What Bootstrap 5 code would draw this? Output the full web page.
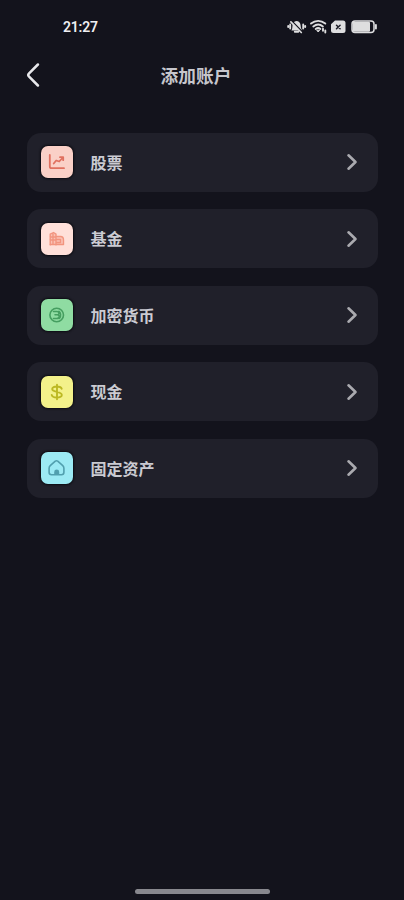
<!DOCTYPE html>
<html lang="zh-CN">
<head>
<meta charset="utf-8">
<meta name="viewport" content="width=device-width, initial-scale=1">
<title>添加账户</title>
<link href="https://cdn.jsdelivr.net/npm/bootstrap@5.3.0/dist/css/bootstrap.min.css" rel="stylesheet">
<style>
body{background:#13131c;color:#d9d9de;font-family:Roboto,"Noto Sans CJK SC",sans-serif}
.screen{height:900px;width:100%;overflow:hidden}
.status{height:52px;padding:1px 25px 0 63px}
.clock{font-size:14px;letter-spacing:-.2px;font-weight:600;color:#f0f0f2;line-height:1}
.topbar{height:48px;padding:0 38px 0 26px}
.topbar .side{width:33px;color:#e8e8eb;line-height:0}
.page-title{font-size:17.7px;font-weight:600;line-height:1;margin:0;padding-top:4px;color:#c6c6cc}
.accounts{padding:32.5px 26px 0 27px;gap:17.5px}
.account{height:59px;border-radius:14px;background:#20202a;padding:0 20.5px 0 14px;color:#cbcbd2;font-size:16px;font-weight:700;line-height:1}
.account:hover{color:#fff}
.account-name{padding-top:3px}
.tile{width:32px;height:32px;border-radius:7px;margin-right:17.5px;box-shadow:0 0 2px 1px #0c0c12}
.stock{background:#fad0c7;color:#e0705f}
.fund{background:#ffe0d9;color:#f2957f}
.crypto{background:#8fdca2;color:#459e60}
.cash{background:#f3f18a;color:#bcb823}
.asset{background:#9ceaf4;color:#519fae}
.chev{color:#aaaaaf}
.homebar{width:135px;height:5px;background:#88888e;margin-bottom:6.5px}
svg{display:block;fill:none;stroke:currentColor;stroke-linecap:round;stroke-linejoin:round}
</style>
</head>
<body>
<div class="screen d-flex flex-column">
  <div class="status d-flex align-items-center justify-content-between">
    <span class="clock">21:27</span>
    <svg width="92" height="16" viewBox="0 0 92 16" color="#dededf">
      <path d="M4.400 11.500C5.500 9.500 5.300 8.500 5.500 6.500 5.700 4 7 2.300 9.300 2c2.600 0 4.100 1.700 4.300 4.200.2 2 .2 3 1.600 5.300z" fill="currentColor" stroke="none"/>
      <path d="M7.800 12.700h3.500M3.200 5.500v4M16.200 5.500v4M1.200 7v1M18.200 7v1" stroke-width="1.900"/>
      <path d="M5 2.400l10 10.100" stroke="#13131c" stroke-width="1.600"/><path d="M3.900 2.900l10.400 10.600" stroke-width="1.700"/>
      <path d="M24 4.600c4.300-3.400 10-3.400 14.300 0M26.300 7.400c3-2.300 6.700-2.300 9.600 0M28.700 10c1.600-1.200 3.300-1.200 4.700 0" stroke-width="1.900"/>
      <path d="M30 11.500l1.200 1.500 1.200-1.500z" fill="currentColor"/>
      <path d="M36 9.700v2M38.300 11.500v2" stroke-width="1.900"/>
      <path d="M48 1.500H56a2.500 2.500 0 0 1 2.500 2.500v7.500A2.500 2.500 0 0 1 56 14H46.500a2.500 2.500 0 0 1-2.500-2.500V5.200z" fill="currentColor" stroke="none"/>
      <path d="M49.500 6.200l3.600 3.600M53.100 6.200l-3.600 3.600" stroke="#20202a" stroke-width="1.500"/>
      <rect x="65" y="2" width="22" height="11.500" rx="3" stroke-width="1.500"/>
      <rect x="65.500" y="2.700" width="17.500" height="10.100" rx="1.200" fill="currentColor" stroke="none"/>
      <path d="M88.900 6v3.600" stroke-width="1.900"/>
    </svg>
  </div>
  <header class="topbar d-flex align-items-center justify-content-between">
    <a href="#" class="side" aria-label="返回"><svg width="14" height="26" viewBox="0 0 14 26" stroke-width="2.500"><path d="M11.500 1.500L2.700 10.300q-1.700 1.700 0 3.400L11.500 22.500" transform="translate(.4 0)"/></svg></a>
    <h1 class="page-title">添加账户</h1>
    <span class="side"></span>
  </header>
  <main class="accounts d-flex flex-column flex-grow-1">
    <a href="#" class="account d-flex align-items-center text-decoration-none">
      <span class="tile stock d-flex align-items-center justify-content-center"><svg width="18" height="18" viewBox="0 0 18 18" stroke-width="1.800"><path d="M1.800 2v11.500q0 1.700 1.700 1.700H16"/><path d="M5.700 10.500l2.500-3 3 1L14.500 5M12 4.200h3.200v3"/></svg></span>
      <span class="account-name">股票</span>
      <svg class="chev ms-auto" width="12" height="18" viewBox="0 0 12 18" stroke-width="2.600"><path d="M2.500 2.300L9.500 9l-7 6.700"/></svg>
    </a>
    <a href="#" class="account d-flex align-items-center text-decoration-none">
      <span class="tile fund d-flex align-items-center justify-content-center"><svg width="18" height="18" viewBox="0 0 18 18" stroke-width="1.400"><path d="M2.200 15V4.200L5.500 2.500 8 4.200V15M2 7h6M2 10h6M5 4v10M8 6.500h4.500q3 0 3 3.500v4.500H2M9 9.500h3.500v3H9" fill="#f2957f66"/></svg></span>
      <span class="account-name">基金</span>
      <svg class="chev ms-auto" width="12" height="18" viewBox="0 0 12 18" stroke-width="2.600"><path d="M2.500 2.300L9.500 9l-7 6.700"/></svg>
    </a>
    <a href="#" class="account d-flex align-items-center text-decoration-none">
      <span class="tile crypto d-flex align-items-center justify-content-center"><svg width="18" height="18" viewBox="0 0 18 18" stroke-width="1.600"><circle cx="8.700" cy="9" r="6.800"/><path d="M5.500 5.500h3.300c3 0 3 3.300 0 3.300H7 9.200c3 0 2.700 3.700-.4 3.700H5.500M11 5.300c1.700 1.500 2.300 4.500.5 7"/></svg></span>
      <span class="account-name">加密货币</span>
      <svg class="chev ms-auto" width="12" height="18" viewBox="0 0 12 18" stroke-width="2.600"><path d="M2.500 2.300L9.500 9l-7 6.700"/></svg>
    </a>
    <a href="#" class="account d-flex align-items-center text-decoration-none">
      <span class="tile cash d-flex align-items-center justify-content-center"><svg width="18" height="18" viewBox="0 0 18 18" stroke-width="1.900"><path d="M13.700 5.800C13 2.900 4.200 2.500 4.200 6c0 3.500 9.600 2.200 9.600 5.900 0 3.700-9.400 3.400-10.100 0M9 1.800v14.400"/></svg></span>
      <span class="account-name">现金</span>
      <svg class="chev ms-auto" width="12" height="18" viewBox="0 0 12 18" stroke-width="2.600"><path d="M2.500 2.300L9.500 9l-7 6.700"/></svg>
    </a>
    <a href="#" class="account d-flex align-items-center text-decoration-none">
      <span class="tile asset d-flex align-items-center justify-content-center"><svg width="18" height="18" viewBox="0 0 18 18" stroke-width="1.600"><path d="M7.300 2.200Q8.500 1.400 9.700 2.200L14.500 6.300q1.400 1.200 1.400 3v3.900q0 2.500-2.500 2.500H3.600q-2.500 0-2.500-2.500V9.300q0-1.800 1.400-3z"/><path d="M7 15.200V13q0-1.600 1.700-1.600t1.700 1.600v2.200z" fill="currentColor"/></svg></span>
      <span class="account-name">固定资产</span>
      <svg class="chev ms-auto" width="12" height="18" viewBox="0 0 12 18" stroke-width="2.600"><path d="M2.500 2.300L9.500 9l-7 6.700"/></svg>
    </a>
  </main>
  <div class="homebar rounded-pill mx-auto"></div>
</div>
<script src="https://cdn.jsdelivr.net/npm/bootstrap@5.3.0/dist/js/bootstrap.bundle.min.js"></script>
</body>
</html>
